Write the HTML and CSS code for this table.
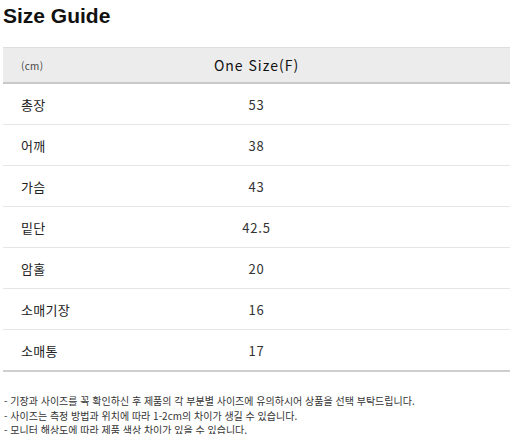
FILE: index.html
```html
<!DOCTYPE html>
<html lang="ko">
<head>
<meta charset="utf-8">
<link rel="stylesheet" href="styles.css">
</head>
<body>
<div class="page">
  <h1 class="title">Size Guide</h1>
  <table class="size-table">
    <colgroup><col class="c1"><col class="c2"><col class="c3"></colgroup>
    <thead>
      <tr><th class="unit">(cm)</th><th class="size">One Size(F)</th><th></th></tr>
    </thead>
    <tbody>
      <tr><td class="label">총장</td><td class="val">53</td><td></td></tr>
      <tr><td class="label">어깨</td><td class="val">38</td><td></td></tr>
      <tr><td class="label">가슴</td><td class="val">43</td><td></td></tr>
      <tr><td class="label">밑단</td><td class="val">42.5</td><td></td></tr>
      <tr><td class="label">암홀</td><td class="val">20</td><td></td></tr>
      <tr><td class="label">소매기장</td><td class="val">16</td><td></td></tr>
      <tr><td class="label">소매통</td><td class="val">17</td><td></td></tr>
    </tbody>
  </table>
  <ul class="notes">
    <li>- 기장과 사이즈를 꼭 확인하신 후 제품의 각 부분별 사이즈에 유의하시어 상품을 선택 부탁드립니다.</li>
    <li>- 사이즈는 측정 방법과 위치에 따라 1-2cm의 차이가 생길 수 있습니다.</li>
    <li>- 모니터 해상도에 따라 제품 색상 차이가 있을 수 있습니다.</li>
  </ul>
</div>
</body>
</html>
```
FILE: styles.css
```css
html, body { margin: 0; padding: 0; background: #fff; }
body { font-family: "Noto Sans CJK KR", "Noto Sans", sans-serif; color: #222; }
.page { padding: 4px 1px 0 3px; }
.title {
  margin: 0;
  font-family: "Liberation Sans", Arial, sans-serif;
  font-weight: bold;
  font-size: 21px;
  line-height: 24px;
  color: #111;
}
.size-table {
  margin-top: 19px;
  width: 507px;
  border-collapse: collapse;
  table-layout: fixed;
}
.c1 { width: 150px; }
.c2 { width: 207px; }
.size-table thead tr {
  background: #ececec;
  border-top: 1px solid #dedede;
  border-bottom: 2px solid #c9c9c9;
}
.size-table th { height: 34px; padding: 0; font-weight: normal; }
.unit { text-align: left; padding-left: 18px !important; font-size: 10px; color: #444; letter-spacing: 0.3px; }
.size { text-align: center; font-size: 14px; letter-spacing: 1px; color: #111; }
.size-table tbody tr { border-bottom: 1px solid #e6e6e6; }
.size-table tbody tr:last-child { border-bottom: 2px solid #cfcfcf; }
.size-table td { height: 40px; padding: 0; }
.label { padding-left: 18px !important; font-size: 13px; color: #222; letter-spacing: 0.3px; }
.val { text-align: center; font-size: 13px; color: #333; letter-spacing: 0.8px; }
.notes {
  list-style: none;
  margin: 22px 0 0;
  padding: 0 0 0 1px;
  font-size: 10px;
  line-height: 14.5px;
  color: #333;
}
```
